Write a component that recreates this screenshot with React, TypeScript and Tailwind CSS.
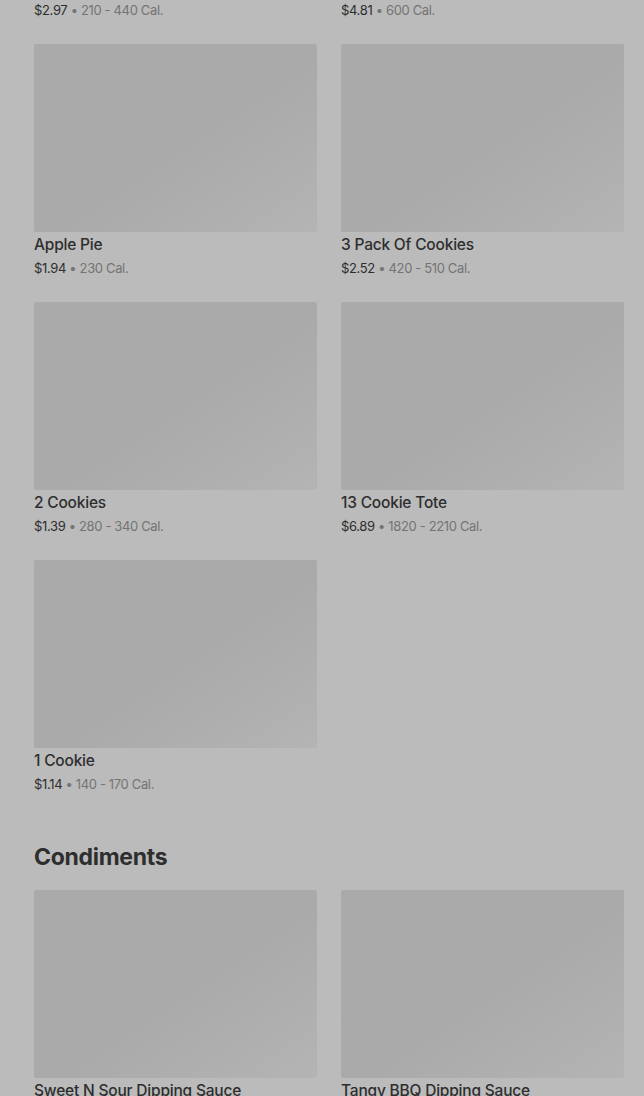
type Item = { name: string; price: string; cal: string }

const desserts: Item[] = [
  { name: "Apple Pie", price: "$1.94", cal: "230 Cal." },
  { name: "3 Pack Of Cookies", price: "$2.52", cal: "420 - 510 Cal." },
  { name: "2 Cookies", price: "$1.39", cal: "280 - 340 Cal." },
  { name: "13 Cookie Tote", price: "$6.89", cal: "1820 - 2210 Cal." },
  { name: "1 Cookie", price: "$1.14", cal: "140 - 170 Cal." },
]

const condiments: Item[] = [
  { name: "Sweet N Sour Dipping Sauce", price: "$0.30", cal: "50 Cal." },
  { name: "Tangy BBQ Dipping Sauce", price: "$0.30", cal: "45 Cal." },
]

const PriceLine = ({ price, cal }: { price: string; cal: string }) => (
  <div className="text-[13px] leading-[22px] tracking-[-0.35px]">
    <span className="text-[#2e2e2e]">{price}</span>
    <span className="text-[#747474]"> • {cal}</span>
  </div>
)

const Card = ({ item }: { item: Item }) => (
  <div className="flex flex-col">
    <div className="h-[188px] rounded-[2px] bg-gradient-to-br from-[#aaaaaa] via-[#aaaaaa] via-55% to-[#b4b4b4]" />
    <div className="pt-[1px] text-[15.5px] leading-[24px] font-medium text-[#2e2e2e] tracking-[-0.2px]">{item.name}</div>
    <PriceLine price={item.price} cal={item.cal} />
  </div>
)

export default function App() {
  return (
    <div
      className="min-h-screen h-[1096px] overflow-hidden bg-[#bbbbbb] pl-[34px] pr-[20px]"
      style={{ fontFamily: "Inter, 'Noto Sans', sans-serif" }}
    >
      <div className="grid grid-cols-2 gap-x-[24px]">
        <div className="-mt-[1px]">
          <PriceLine price="$2.97" cal="210 - 440 Cal." />
        </div>
        <div className="-mt-[1px]">
          <PriceLine price="$4.81" cal="600 Cal." />
        </div>
      </div>
      <div className="mt-[23px] grid grid-cols-2 gap-x-[24px] gap-y-[23px]">
        {desserts.map((d) => (
          <Card key={d.name} item={d} />
        ))}
      </div>
      <h2 className="mt-[46px] mb-[17px] text-[23px] leading-[32px] font-bold text-[#2e2e2e] tracking-[-0.3px]">
        Condiments
      </h2>
      <div className="grid grid-cols-2 gap-x-[24px] gap-y-[23px]">
        {condiments.map((d) => (
          <Card key={d.name} item={d} />
        ))}
      </div>
    </div>
  )
}
